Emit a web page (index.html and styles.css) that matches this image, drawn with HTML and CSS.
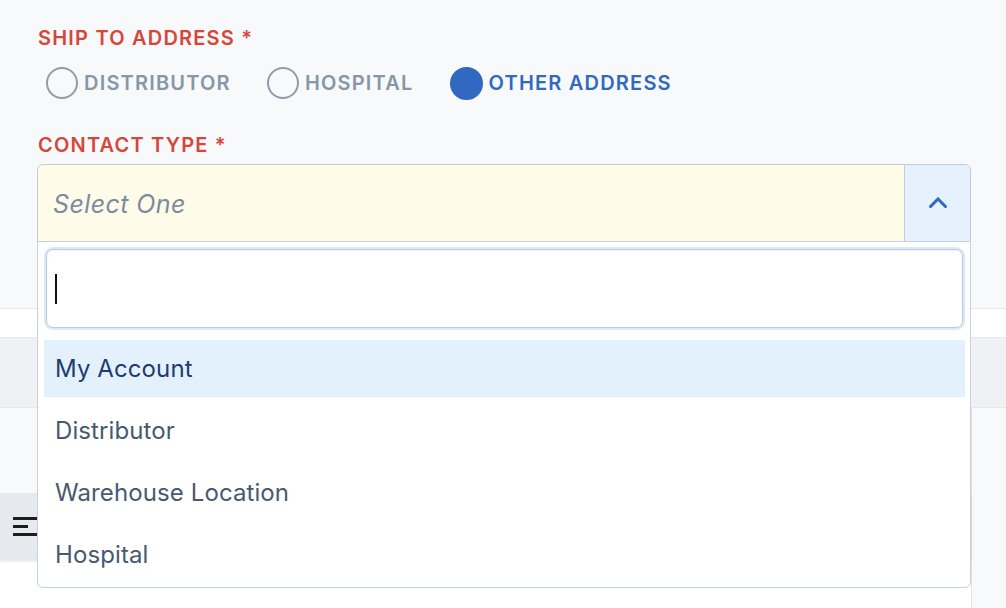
FILE: index.html
```html
<!DOCTYPE html>
<html lang="en">
<head>
<meta charset="utf-8">
<title>Ship To Address</title>
<link rel="stylesheet" href="styles.css">
</head>
<body>
<div class="page">
  <section class="form-area">
    <div class="field-label">SHIP TO ADDRESS *</div>
    <div class="radio-row">
      <label class="radio"><span class="dot"></span><span class="radio-text">DISTRIBUTOR</span></label>
      <label class="radio"><span class="dot"></span><span class="radio-text">HOSPITAL</span></label>
      <label class="radio checked"><span class="dot"></span><span class="radio-text">OTHER ADDRESS</span></label>
    </div>
    <div class="field-label contact">CONTACT TYPE *</div>
    <div class="select-wrap">
      <div class="select">
        <div class="select-value">Select One</div>
        <div class="select-toggle">
          <svg width="18" height="11" viewBox="0 0 18 11"><path d="M1.5 9.5 L9 2 L16.5 9.5" fill="none" stroke="#3169c1" stroke-width="3" stroke-linecap="square" stroke-linejoin="miter"/></svg>
        </div>
      </div>
      <div class="dropdown">
        <div class="search"><span class="caret"></span></div>
        <ul class="options">
          <li class="option active">My Account</li>
          <li class="option">Distributor</li>
          <li class="option">Warehouse Location</li>
          <li class="option">Hospital</li>
        </ul>
      </div>
    </div>
  </section>
  <div class="band-white"></div>
  <div class="band-gray"></div>
  <div class="lower">
    <div class="main-col">
      <div class="band-light"></div>
      <div class="toolbar">
        <svg class="menu-icon" width="24" height="19" viewBox="0 0 24 19"><rect x="0" y="0" width="24" height="3" fill="#1c1c1c"/><rect x="0" y="8" width="15" height="3" fill="#1c1c1c"/><rect x="0" y="16" width="24" height="3" fill="#1c1c1c"/></svg>
      </div>
      <div class="band-rest"></div>
    </div>
    <div class="side-col"></div>
  </div>
</div>
</body>
</html>
```

FILE: styles.css
```css
* { box-sizing: border-box; }
html, body { margin: 0; padding: 0; }
body {
  width: 1006px;
  height: 608px;
  overflow: hidden;
  background: #f8f9fa;
  font-family: Inter, "Noto Sans", sans-serif;
}
.page { display: flex; flex-direction: column; height: 608px; }

.form-area {
  height: 309px;
  padding: 26px 35px 0 38px;
  background: #f8f9fa;
  border-bottom: 1px solid #e4e7eb;
  display: flex;
  flex-direction: column;
}
.field-label {
  color: #d6463a;
  font-size: 20px;
  font-weight: 600;
  line-height: 24px;
  letter-spacing: 1.2px;
}
.field-label.contact { margin-top: 33px; }

.radio-row {
  display: flex;
  gap: 36px;
  margin-top: 16px;
  height: 34px;
  align-items: center;
  padding-left: 8px;
}
.radio { display: flex; align-items: center; gap: 6px; }
.dot {
  width: 32px; height: 32px;
  border-radius: 50%;
  border: 2.5px solid #8f9cab;
  background: #f8f9fa;
}
.radio-text {
  color: #8796a8;
  font-size: 20px;
  font-weight: 600;
  letter-spacing: 1.2px;
}
.radio.checked .dot { width: 33px; height: 33px; background: #3169c1; border-color: #3169c1; }
.radio.checked .radio-text { color: #3169c1; }

.select-wrap { position: relative; margin-top: 7px; margin-left: -1px; }
.select {
  height: 78px;
  border: 1px solid #c3cbd5;
  border-radius: 6px 6px 0 0;
  background: #fffbe9;
  display: flex;
  overflow: hidden;
}
.select-value {
  flex: 1;
  display: flex;
  align-items: center;
  padding-left: 15px;
  font-size: 25px;
  letter-spacing: 0.4px;
  font-style: italic;
  color: #7b8ca0;
  padding-top: 1px;
}
.select-toggle {
  width: 66px;
  background: #e5f2fd;
  border-left: 1px solid #c3cbd5;
  display: flex;
  align-items: center;
  justify-content: center;
  padding-bottom: 2px;
}

.dropdown {
  position: absolute;
  left: 0; right: 0;
  top: 77px;
  height: 347px;
  background: #fff;
  border: 1px solid #c8d0da;
  border-radius: 0 0 6px 6px;
  padding: 7px 7px 0 8px;
  z-index: 5;
}
.search {
  height: 79px;
  border: 1px solid #b7cbe2;
  border-radius: 7px;
  box-shadow: 0 0 0 2px #dde9f6, inset 0 1px 2px rgba(0,0,0,0.04);
  background: #fff;
  display: flex;
  align-items: center;
  padding-left: 8px;
}
.caret { width: 2px; height: 30px; background: #111; }

.options { list-style: none; margin: 12px 0 0 -2px; padding: 0; width: 921px; }
.option {
  height: 57px;
  margin-bottom: 4.9px;
  display: flex;
  align-items: center;
  padding-left: 11px;
  font-size: 24px;
  letter-spacing: 0.1px;
  color: #475a70;
}
.option.active { background: #e3f1fc; color: #1f3b6f; }

.band-white { height: 29px; background: #fff; border-bottom: 1px solid #e4e7eb; }
.band-gray { height: 70px; background: #f0f1f5; border-bottom: 1px solid #e4e7eb; }
.lower { flex: 1; display: flex; }
.main-col { width: 972px; display: flex; flex-direction: column; border-right: 1px solid #e0e4e9; }
.band-light { height: 85px; background: #f8f9fa; }
.toolbar {
  height: 66px;
  background: #e6e9ee;
  box-shadow: 0 2px 3px rgba(0,0,0,0.12);
  display: flex;
  align-items: center;
  padding-left: 13px;
  position: relative;
  z-index: 1;
}
.band-rest { flex: 1; background: #fff; }
.side-col { flex: 1; background: #f8f9fa; }
```
